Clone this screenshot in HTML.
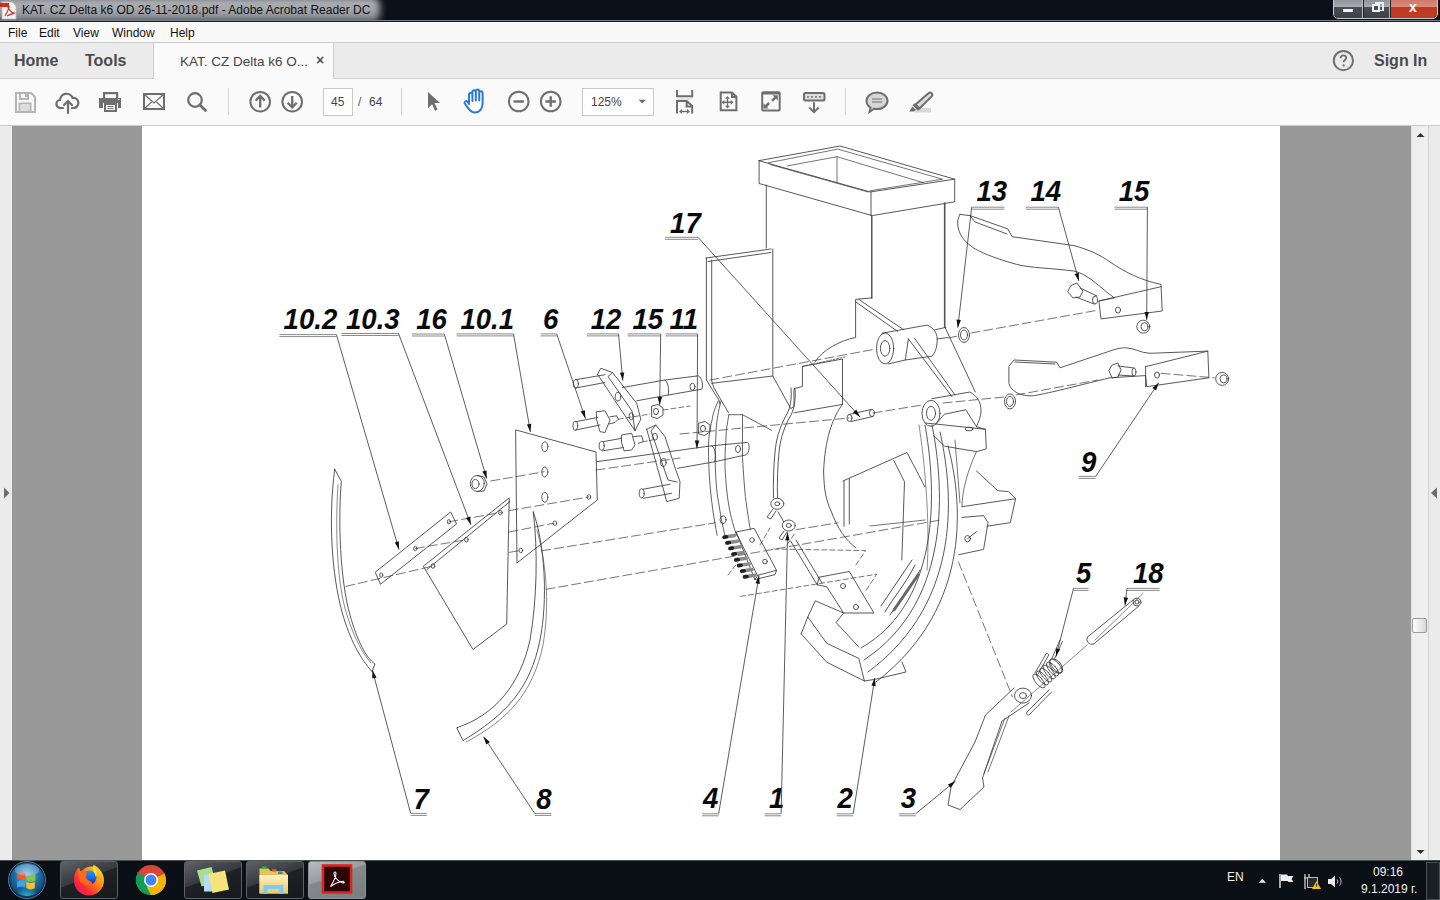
<!DOCTYPE html>
<html><head><meta charset="utf-8">
<style>
*{margin:0;padding:0;box-sizing:border-box}
html,body{width:1440px;height:900px;overflow:hidden;background:#999;font-family:"Liberation Sans",sans-serif;position:relative}
.abs{position:absolute}
svg{position:absolute;overflow:visible}
#title{left:0;top:0;width:1440px;height:22px;background:#0b1019}
#glow{left:-6px;top:-3px;width:386px;height:25px;background:linear-gradient(180deg,#b4b8bc 0%,#a4a8ad 50%,#7d8288 100%);filter:blur(3.5px);border-radius:8px}
#ttext{left:22px;top:3px;font-size:12px;color:#111;white-space:nowrap;letter-spacing:0}
#tline{left:0;top:20px;width:1440px;height:1px;background:#7a7f86}
#tline2{left:0;top:21px;width:1440px;height:1px;background:#1b1e22}
#menu{left:0;top:22px;width:1440px;height:20px;background:#f9f9f9}
#menu span{position:absolute;top:4px;font-size:12px;color:#111}
#tabs{left:0;top:42px;width:1440px;height:37px;background:#ebebeb;border-top:1px solid #c9c9c9;border-bottom:1px solid #cfcfcf}
#tabs b{position:absolute;top:9px;font-size:16px;color:#4b4b4b;font-weight:bold}
#acttab{left:153px;top:42px;width:181px;height:37px;background:#fafafa;border-left:1px solid #cdcdcd;border-right:1px solid #cdcdcd;border-top:1px solid #c9c9c9}
#acttab span{position:absolute;left:26px;top:11px;font-size:13.5px;color:#444;white-space:nowrap}
#toolbar{left:0;top:79px;width:1440px;height:47px;background:#fafafa;border-bottom:1px solid #cacaca}
.sep{position:absolute;top:88px;width:1px;height:27px;background:#d2d2d2}
.box{position:absolute;top:88px;height:28px;background:#fff;border:1px solid #c8c8c8}
#lstrip{left:0;top:126px;width:12px;height:734px;background:#ebebeb;border-right:1px solid #f2f2f2}
#gl{left:12px;top:126px;width:1px;height:734px;background:#939393}
#page{left:142px;top:126px;width:1138px;height:734px;background:#fff}
#rscroll{left:1411px;top:126px;width:18px;height:734px;background:#efefef;border-left:1px solid #e2e2e2;border-right:1px solid #d0d0d0}
#rstrip{left:1429px;top:126px;width:11px;height:734px;background:#ebebeb}
#thumb{left:1412px;top:618px;width:15px;height:15px;border:1px solid #9a9a9a;border-radius:2px;background:linear-gradient(90deg,#fdfdfd,#d8d8d8)}
#taskbar{left:0;top:860px;width:1440px;height:40px;background:#0b1016;border-top:1px solid #4a4f55}
.tb{position:absolute;top:861px;width:58px;height:38px;border:1px solid #5d6166;border-radius:3px;background:linear-gradient(160deg,#5e6266 0%,#35393d 45%,#1e2226 46%,#15191c 100%)}
.tray{position:absolute;color:#f2f2f2;font-size:12px;white-space:nowrap}
</style></head><body>
<div id="title" class="abs"></div>
<div id="glow" class="abs"></div>
<svg style="left:0;top:1px" width="18" height="19" viewBox="0 0 18 19"><path d="M2 1h10l4 4v13H2z" fill="#f4f4f4" stroke="#bbb" stroke-width="0.8"/><path d="M0 2h9v4H0z" fill="#d8261c"/><path d="M5 15c2-4 4-7 4-9s-1-1-1 0 3 6 6 6-2 0-7 3" fill="none" stroke="#d8261c" stroke-width="1.1"/></svg>
<div id="ttext" class="abs">KAT. CZ Delta k6 OD 26-11-2018.pdf - Adobe Acrobat Reader DC</div>
<div id="tline" class="abs"></div><div id="tline2" class="abs"></div>
<!-- window buttons -->
<div class="abs" style="left:1333px;top:-2px;width:105px;height:21px;border:1px solid #c8ccd0;border-radius:0 0 5px 5px;overflow:hidden;background:#222">
 <div class="abs" style="left:0;top:0;width:29px;height:20px;background:linear-gradient(180deg,#8c9096 0%,#a9adb1 40%,#4a4f57 42%,#3b4048 100%);border-right:1px solid #b9bdc2"></div>
 <div class="abs" style="left:30px;top:0;width:26px;height:20px;background:linear-gradient(180deg,#8c9096 0%,#a9adb1 40%,#4a4f57 42%,#3b4048 100%);border-right:1px solid #d0a8a0"></div>
 <div class="abs" style="left:57px;top:0;width:48px;height:20px;background:linear-gradient(180deg,#c9776a 0%,#dd8e7f 40%,#c2391f 42%,#b93e2a 100%)"></div>
 <div class="abs" style="left:9px;top:10px;width:10px;height:3px;background:#eef"></div>
 <div class="abs" style="left:41px;top:3px;width:9px;height:9px;border:2px solid #eee;border-left-width:1px;border-bottom-width:1px"></div>
 <div class="abs" style="left:38px;top:5px;width:8px;height:8px;border:2px solid #f4f4f4;background:#4a4f57"></div>
 <div class="abs" style="left:75px;top:0px;font:bold 14px 'Liberation Sans',sans-serif;color:#fff">x</div>
</div>
<div id="menu" class="abs"><span style="left:8px">File</span><span style="left:39px">Edit</span><span style="left:73px">View</span><span style="left:112px">Window</span><span style="left:170px">Help</span></div>
<div id="tabs" class="abs"><b style="left:14px">Home</b><b style="left:85px">Tools</b>
<b style="left:1374px;font-weight:bold">Sign In</b></div>
<svg style="left:1332px;top:49px" width="24" height="24" viewBox="0 0 24 24"><circle cx="11.4" cy="11.6" r="9.6" fill="none" stroke="#6e6e6e" stroke-width="2"/><path d="M8.6 9.2c0-1.8 1.2-2.8 2.8-2.8s2.8 1 2.8 2.6c0 1.9-2.6 2.2-2.6 4.2" fill="none" stroke="#6e6e6e" stroke-width="1.8"/><circle cx="11.6" cy="16.4" r="1.1" fill="#6e6e6e"/></svg>
<div id="acttab" class="abs"><span>KAT. CZ Delta k6 O...</span><span style="left:162px;top:8.5px;font-size:14px;font-weight:bold;color:#555">&#215;</span></div>
<div id="toolbar" class="abs"></div>
<div class="sep" style="left:228px"></div><div class="sep" style="left:401px"></div><div class="sep" style="left:845px"></div>
<div class="box" style="left:323px;width:30px"></div>
<div class="abs" style="left:331px;top:95px;font-size:12px;color:#444">45</div>
<div class="abs" style="left:358px;top:95px;font-size:12px;color:#555">/</div>
<div class="abs" style="left:369px;top:95px;font-size:12px;color:#444">64</div>
<div class="box" style="left:582px;width:72px"></div>
<div class="abs" style="left:591px;top:95px;font-size:12px;color:#444">125%</div>
<svg style="left:0;top:80px" width="940" height="46" viewBox="0 80 940 46" id="icons">
 <!-- save -->
 <g fill="none" stroke="#b4b4b4" stroke-width="2"><path d="M16 93h15l4 4v15H16z"/><path d="M20 93v6h8v-6"/><rect x="19.5" y="103.5" width="11" height="8"/></g>
 <rect x="25" y="94" width="2" height="3" fill="#b4b4b4"/><rect x="20.5" y="104.5" width="9" height="6" fill="#ddd"/>
 <!-- upload -->
 <g fill="none" stroke="#6e6e6e" stroke-width="2.2" stroke-linecap="round"><path d="M63 108h-2a4 4 0 0 1 -1 -8a6.5 6.5 0 0 1 12.6 -2a4.6 4.6 0 0 1 1.5 10h-2"/><path d="M68 113v-12M64 105l4-4 4 4"/></g>
 <!-- printer -->
 <g fill="#6e6e6e"><rect x="103" y="92" width="15" height="2.2"/><rect x="103" y="92" width="2.2" height="6"/><rect x="116" y="92" width="2.2" height="6"/><path d="M99 98h22v10h-3v-5h-15v5h-4z"/><path d="M104 103h13v9h-13z"/></g>
 <rect x="106" y="105" width="9" height="5" fill="#fafafa"/><rect x="107.5" y="106" width="6" height="1" fill="#6e6e6e"/><rect x="107.5" y="108" width="6" height="1" fill="#6e6e6e"/><rect x="118" y="99" width="1.5" height="1" fill="#fafafa"/>
 <!-- mail -->
 <g fill="none" stroke="#6e6e6e" stroke-width="2"><rect x="144" y="94" width="20" height="15"/><path d="M144 94l10 9 10-9M144 109l7.5-7M164 109l-7.5-7" stroke-width="1.2"/></g>
 <!-- search -->
 <g fill="none" stroke="#6e6e6e" stroke-width="2.2"><circle cx="195" cy="100" r="6.8"/><path d="M200 105l5.5 5.5" stroke-width="2.8" stroke-linecap="round"/></g>
 <!-- up/down -->
 <g fill="none" stroke="#6e6e6e" stroke-width="2"><circle cx="260.2" cy="101.7" r="9.8"/><path d="M260.2 107.5v-11M255.6 100.6l4.6-4.6 4.6 4.6" stroke-width="2.3"/>
 <circle cx="292.2" cy="101.7" r="9.8"/><path d="M292.2 96v11M287.6 102.8l4.6 4.6 4.6-4.6" stroke-width="2.3"/></g>
 <!-- cursor -->
 <path d="M428 92l12 11h-5.5l3 6.5-2.4 1.5-3-6.8-4.1 4z" fill="#6e6e6e"/>
 <!-- hand -->
 <path d="M469 104v-9.5a1.7 1.7 0 0 1 3.4 0v6.5v-9a1.7 1.7 0 0 1 3.4 0v8.5v-9.2a1.7 1.7 0 0 1 3.4 0v9.2v-7.5a1.7 1.7 0 0 1 3.4 0v10.5c0 5-3 9-7.5 9c-3 0-5-1.6-7-4.4l-3.4-4.6a1.7 1.7 0 0 1 2.6 -2z" fill="none" stroke="#2d7bd0" stroke-width="2" stroke-linejoin="round"/>
 <!-- zoom -->
 <g fill="none" stroke="#6e6e6e" stroke-width="2"><circle cx="518.7" cy="101.5" r="9.8"/><path d="M513.5 101.5h10.4" stroke-width="2.4"/><circle cx="550.7" cy="101.5" r="9.8"/><path d="M545.5 101.5h10.4M550.7 96.3v10.4" stroke-width="2.4"/></g>
 <path d="M638.5 99.8h7.5l-3.75 3.8z" fill="#6e6e6e"/>
 <!-- fit width -->
 <path d="M677,90v6.3h15.2v-6.3" fill="none" stroke="#6e6e6e" stroke-width="2"/>
 <rect x="677" y="98.5" width="15.2" height="1" fill="#cfcfcf"/>
 <path d="M677,113.5v-12.6h9.7l5.5,5v7.6M686.7,101v5.5h5.5" fill="none" stroke="#6e6e6e" stroke-width="2"/>
 <path d="M681,111.5h7" stroke="#6e6e6e" stroke-width="1.4"/><path d="M679,111.5l3-2.6v5.2zM690,111.5l-3-2.6v5.2z" fill="#6e6e6e"/>
 <!-- page arrows -->
 <path d="M720.7,110.2V92.5h11.2l4.5,4.2v13.5z M731.9,92.5v4.5h4.5" fill="none" stroke="#6e6e6e" stroke-width="2"/>
 <path d="M727.5,98.5v7.5M723.5,102.3h8" stroke="#6e6e6e" stroke-width="1.4"/>
 <path d="M727.5,96l-2.4,2.8h4.8zM727.5,108.6l-2.4,-2.8h4.8zM721.5,102.3l2.8,-2.4v4.8zM733.5,102.3l-2.8,-2.4v4.8z" fill="#6e6e6e"/>
 <!-- fullscreen -->
 <rect x="762.2" y="92.2" width="17.5" height="18.3" rx="1" fill="none" stroke="#6e6e6e" stroke-width="2"/>
 <rect x="763" y="93" width="16" height="1.5" fill="#6e6e6e"/>
 <path d="M772.5,95.2h5.3v5.3l-1.8,-1.8l-3,3l-1.8,-1.8l3,-3z M768.7,108.6h-5.3v-5.3l1.8,1.8l3,-3l1.8,1.8l-3,3z" fill="#6e6e6e"/>
 <!-- scroll -->
 <rect x="804" y="93" width="20.5" height="7.6" rx="1.5" fill="#dedede" stroke="#6e6e6e" stroke-width="2"/>
 <path d="M807.2,96.8h1.6M811.2,96.8h1.6M815.2,96.8h1.6M819.2,96.8h1.6" stroke="#6e6e6e" stroke-width="1.8"/>
 <path d="M814,102.2v10M809.3,107.5l4.7,4.7 4.7,-4.7" fill="none" stroke="#6e6e6e" stroke-width="2"/>
 <!-- comment -->
 <path d="M877 92.5c6 0 10.5 3.8 10.5 8.3s-4.5 8.3-10.5 8.3c-1 0-2 -0.1-3 -0.3l-4.5 3.2 1-4.4c-2.5-1.5-4-4-4-6.8 0-4.5 4.5-8.3 10.5-8.3z" fill="#d6d6d6" stroke="#6e6e6e" stroke-width="2"/><path d="M872 99h10M872 102h10" stroke="#6e6e6e" stroke-width="1.2"/>
 <!-- highlight -->
 <rect x="915" y="108" width="16" height="4.5" fill="#d8d8d8"/>
 <path d="M928.5,93.2c1,-0.8 2.4,-0.7 3.2,0.2c0.8,0.9 0.8,2.2 0,3L919.5,108.5l-4,-4z" fill="#dcdcdc" stroke="#6e6e6e" stroke-width="2" stroke-linejoin="round"/>
 <path d="M914.5,103.2l5.5,5.5l-2,2l-5.5,-5.5z" fill="#6e6e6e"/>
 <path d="M912.5,106.5l3.2,3.2l-1.5,1.8h-5z" fill="#6e6e6e"/>
</svg>
<div id="lstrip" class="abs"></div><div id="gl" class="abs"></div>
<svg style="left:3px;top:487px" width="8" height="12" viewBox="0 0 8 12"><path d="M1 0.5l5.5 5.5-5.5 5.5z" fill="#6b6b6b"/></svg>
<div id="page" class="abs"></div>
<!--DRAW-->
<svg style="left:0;top:0" width="1440" height="900" viewBox="0 0 1440 900">
<g fill="none" stroke="#3a3a3a" stroke-width="0.85" stroke-linejoin="round" stroke-linecap="round">

<!-- hopper -->
<path d="M759.1,160.6L840.1,146L954.7,179.2L870.6,191.9Z"/>
<path d="M768.3,162.8L837.8,149.1L942.4,179.2L869.9,190.8" stroke-width="0.7"/>
<path d="M787.4,165.9L837,156.7L923.3,182.7M837,156.7V182M770,164.5L868,192" stroke-width="0.7"/>
<path d="M759.1,160.6V183.5L872.2,215.6L954.7,201.8V179.2M871,192V215.6"/>
<path d="M766.3,185V248M871.7,216V298M944.4,203V327.5"/>
<!-- plate behind hopper -->
<path d="M706,258L771,249M708,261.5L771,252.5M706.4,258V380L719,400.2L720,404.4M711.7,260V381L713.8,387.5L728.5,412.8M772.8,249V376"/>
<path d="M711.7,383.3L772.8,376L790.8,408.6L794,406.5V388.6L802.4,386.5V366.4L842.5,359V404.4L794,412.8"/>
<path d="M802.4,366.4L845,357" stroke-dasharray="2,1.5" stroke-width="0.7"/>
<!-- tube wire -->
<path d="M791,388C792,400 790,408 787,414C781,424 777,436 775.5,447.7C773.5,465 773,485 773.6,498M795,389C796,400 794,409 791,415C785,425 781,437 779.5,448C777.5,465 777,485 777.6,498"/>
<!-- housing arcs -->
<path d="M871.9,297.9L855.6,299.4V337.5C840,340.7 822,350 815,362M842.5,404.4C832,418 825,440 823.6,471C824,490 826,500 830.7,510C838,530 846,540 855.6,547.6"/>
<path d="M718.2,401C714,410 712,418 712.4,418.6C709,432 708.5,440 708.5,447.7C708.5,460 709,470 709.4,476.9C711,500 714,520 717.2,535.2M721,401C718,412 717,420 716.2,428.3C715.5,445 715,455 715.3,467.2C716,485 717,495 719.2,506C721,518 723,528 725,535.2M728.9,414.7C727,425 726,432 726,438C725,450 725,460 725,467.2C726,485 727,495 728.9,506C731,518 734,528 736.6,535.2M742.5,414.7V457.5C743.5,475 744.5,488 745.4,496.3C747,510 749,522 750.3,529.4M728.9,414.7L742.5,414.7L771.6,430.3" stroke-width="0.8"/>
<ellipse cx="723" cy="519.7" rx="3" ry="3.8"/>
<!-- rib slot -->
<path d="M858.7,299.4L903.8,329.8M855.6,301.8L897.5,331.3M908.4,339L952,396.6M914.6,338.3L955,395"/>
<!-- upper bushing -->
<ellipse cx="885.1" cy="348.4" rx="8.6" ry="15.5"/><ellipse cx="885.1" cy="348.4" rx="4.7" ry="7.8"/>
<path d="M882,333.2L927,325.1C934,328 937.2,333 937.2,339C937.2,348 935,353 931.8,356.2L905.3,360L908.4,339M888.2,364L905.3,360M934.9,329.8L945.8,327.4M937.2,339L947.3,337.5"/>
<path d="M945,203V327.4L952,342.2L975.3,392M871.9,216V298"/>
<!-- circlips -->
<ellipse cx="964" cy="335" rx="5.5" ry="7.5"/><ellipse cx="964" cy="335" rx="3.5" ry="5"/>
<ellipse cx="1010" cy="401.4" rx="5.5" ry="7.5"/><ellipse cx="1010" cy="401.4" rx="3.5" ry="5"/>
<!-- lower bushing + coulter eye block -->
<path d="M931.8,398.7L970,392C977,396 981,402 981,410C981,418 978,422 976.5,426.7"/>
<ellipse cx="931" cy="413.3" rx="9" ry="13"/><ellipse cx="931" cy="413.3" rx="4.5" ry="7"/>
<path d="M925,423L935.6,424L944.5,414.2L965.8,409.8L976.5,426.7L985.4,429.3L986.3,448.9L976.5,451.6L944.5,446.2L933.8,435.6M935.6,424L985.4,429.3"/>
<ellipse cx="969" cy="429" rx="4" ry="1.8"/>
<!-- coulter arcs -->
<path d="M925,425C935,480 945,600 861,648"/>
<path d="M932,425C943,480 955,600 864,660"/>
<path d="M940,432C952,485 966,600 868,672"/>
<path d="M948,446C961,495 976,605 876,682"/>
<path d="M976.5,451.6C968,470 962,490 962,506.7M955,440L960,503" stroke-width="0.7"/>
<path d="M919,425C926,470 930,530 927,570" stroke-width="0.6"/>
<!-- right bracket -->
<path d="M976.5,471L997.8,490.7L1008.5,491.6L1015.6,498.7L1010.3,522.7L987,526.2M962,506.7L1015.6,498.7M962,517.4L983.6,515.6L988,522.7L983.6,549.4L958.7,554.7"/>
<ellipse cx="967.6" cy="538.7" rx="2.8" ry="3.2"/><path d="M967.6,538.7L976.5,531.6"/>
<!-- inner plates -->
<path d="M843,481L907,452.5L925,487M844,481V526.3M849.3,478.8V524M893.8,460.5L904.5,481.8L901.8,560"/>
<path d="M870,526L925,520" stroke-width="0.7"/>
<!-- bottom sled & tube piece -->
<path d="M801.2,633.9L807.8,616.9L826.7,643.3L858.8,658.4L864.4,681L826.7,662.2L801.2,633.9M807.8,616.9L815.3,600.8L843.6,613L836.1,622.5L858.8,647M864.4,681L875.8,679.2L906,672L902,662"/>
<path d="M790.8,541.3L817.2,584.8L826.7,586.7L843.6,613L873.9,613L849.3,571.5L819.1,577.2M796,540L822,583M817.2,584.8L819.1,577.2"/>
<ellipse cx="843" cy="586" rx="2.5" ry="2.5"/><ellipse cx="856" cy="607" rx="2.5" ry="2.5"/>

<path d="M885,612C895,595 905,585 915,565M890,615C900,600 910,588 920,570M881,606L912,560" stroke-width="0.9"/>
<path d="M894,610L918,575" stroke="#666" stroke-width="3" stroke-dasharray="1,1.2"/>
<!-- grommets -->
<ellipse cx="777.3" cy="503.8" rx="6.5" ry="5.5"/><ellipse cx="777.3" cy="503.8" rx="2.5" ry="2"/>
<ellipse cx="788.8" cy="525.5" rx="6.5" ry="5.5"/><ellipse cx="788.8" cy="525.5" rx="2.5" ry="2"/>
<path d="M773,509L767,517L770.8,519L776,511M784,531L779,538L782,540L787,532M778,511.8L783.8,521.9"/>
<!-- part 4 housing strips -->

<!-- brush block 4 -->
<path d="M736.1,532L754.2,528.4L776.5,570.3L757.8,575.3ZM757.8,575.3L754.9,579.6L775.1,574.6L776.5,570.3M736.1,532L754.9,579.6"/>
<path d="M724.5,537.0L734.5,535.5" stroke="#8a8a8a" stroke-width="3.4" stroke-linecap="round"/>
<path d="M724.0,537.2L726.5,536.8" stroke="#222" stroke-width="3.6" stroke-linecap="round"/>
<path d="M727.4,542.7L737.4,541.2" stroke="#8a8a8a" stroke-width="3.4" stroke-linecap="round"/>
<path d="M726.9,542.9L729.4,542.5" stroke="#222" stroke-width="3.6" stroke-linecap="round"/>
<path d="M730.4,548.3L740.4,546.8" stroke="#8a8a8a" stroke-width="3.4" stroke-linecap="round"/>
<path d="M729.9,548.5L732.4,548.1" stroke="#222" stroke-width="3.6" stroke-linecap="round"/>
<path d="M733.3,554.0L743.3,552.5" stroke="#8a8a8a" stroke-width="3.4" stroke-linecap="round"/>
<path d="M732.8,554.2L735.3,553.8" stroke="#222" stroke-width="3.6" stroke-linecap="round"/>
<path d="M736.2,559.7L746.2,558.2" stroke="#8a8a8a" stroke-width="3.4" stroke-linecap="round"/>
<path d="M735.7,559.9L738.2,559.5" stroke="#222" stroke-width="3.6" stroke-linecap="round"/>
<path d="M739.1,565.4L749.1,563.9" stroke="#8a8a8a" stroke-width="3.4" stroke-linecap="round"/>
<path d="M738.6,565.6L741.1,565.2" stroke="#222" stroke-width="3.6" stroke-linecap="round"/>
<path d="M742.1,571.0L752.1,569.5" stroke="#8a8a8a" stroke-width="3.4" stroke-linecap="round"/>
<path d="M741.6,571.2L744.1,570.8" stroke="#222" stroke-width="3.6" stroke-linecap="round"/>
<path d="M745.0,576.7L755.0,575.2" stroke="#8a8a8a" stroke-width="3.4" stroke-linecap="round"/>
<path d="M744.5,576.9L747.0,576.5" stroke="#222" stroke-width="3.6" stroke-linecap="round"/>
<ellipse cx="752" cy="540" rx="2.3" ry="2.3"/><ellipse cx="765" cy="561.6" rx="2.3" ry="2.3"/>
<path d="M728,575L738,562M740.6,596.4L876.7,574.2L865,592M773.9,549L865.6,550.6L854.4,567.2M760,545L770,528M787,545L795,533" stroke-dasharray="5,3" stroke-width="0.7"/>
<!-- rod 11 -->
<path d="M596.7,461.7L711.7,445.8L747.5,442.4C750,444 750,453 745.4,455L715,461.7L677.5,468.3M711.7,445.8C716,448 716,457 715,461.7"/>
<ellipse cx="738" cy="449" rx="2.5" ry="3.5"/>
<!-- upper rod 12 -->
<path d="M575.8,379.7L605,374.7M575.8,388L605,382.5"/><ellipse cx="575.8" cy="383.8" rx="2.5" ry="4.2"/>
<path d="M622.5,387.5L665,380L698.3,375.8C703,378 703,388 701.7,389.2L668.3,395L636.7,400.8M665,380C669,383 669,392 668.3,395"/>
<ellipse cx="692.5" cy="386.7" rx="2.5" ry="3.5"/>
<path d="M597.5,374.2L600.8,368.3L612.5,372.5L636.7,403.3L640.8,419.2L635,430.8L597.5,374.2M612.5,372.5L608,376.5L632,411L635,430.8"/>
<ellipse cx="618" cy="396.7" rx="2.8" ry="4.2"/><ellipse cx="631.3" cy="416.3" rx="2.3" ry="3.5"/>
<!-- bolt 6 -->
<path d="M575.8,421.7L597.5,417.5M575.8,430L600,425M596.7,411.7L605,410.8L610,420L605,432.5L600,431.7L596.7,420ZM610,416.7L616.7,415.8L618.3,419.2L615,422.5L609,424"/>
<ellipse cx="575.3" cy="425.8" rx="2.3" ry="4.5"/>
<path d="M618.3,419.2L650,414M663,410L690,406" stroke-dasharray="5,3" stroke-width="0.7"/>
<!-- nuts -->
<path d="M652,406L658,404.5L663,408L663,415L657.5,418.5L652,417Z"/><ellipse cx="656" cy="411.5" rx="2.5" ry="3.2"/>
<path d="M699,423L705,421.5L710,425L710,432L704.5,435.5L699,434Z"/><ellipse cx="703" cy="428.5" rx="2.5" ry="3.2"/>
<!-- lower pin & bracket 11 -->
<path d="M603,441.7L621.7,438.3M602.5,450.8L623.3,447.5M621.7,435L631.7,433.3L635,445L631.7,450L624,450.8L621.7,443ZM633.3,436.7L641.7,435.8L643.3,441.7L638.3,443.3"/>
<ellipse cx="601.7" cy="445.8" rx="2.5" ry="4.5"/>
<path d="M643.3,441.7L655,439.5" stroke-dasharray="4,2" stroke-width="0.7"/>
<path d="M646.7,429.2L655.8,425L665,436.7L675.8,470L680,481.7L679.2,498.3L666.7,501.7L665,495L646.7,429.2M655.8,425L651,431L668,480L677,482"/>
<ellipse cx="655" cy="436.7" rx="2.5" ry="3.5"/><ellipse cx="663.3" cy="462.5" rx="2.8" ry="4"/>
<path d="M643.3,489.2L670,484.2M643.3,498.3L671.7,493.3"/><ellipse cx="641.7" cy="493.3" rx="2.5" ry="4.5"/>
<!-- pin 17 -->
<path d="M849,414.5L871,409.5M851,421.5L873,416.5"/><ellipse cx="849.5" cy="418" rx="2.5" ry="3.5"/><ellipse cx="872" cy="413" rx="2.5" ry="3.5"/>
<!-- plate 10.1 -->
<path d="M516,430L596,452L597.3,500L517.3,562.7Z"/>
<ellipse cx="544.8" cy="446.7" rx="3" ry="5"/><ellipse cx="544.8" cy="472" rx="3" ry="5"/><ellipse cx="544.8" cy="497.3" rx="3" ry="5"/>
<!-- plate 10.3 -->
<path d="M423.6,566L509.2,497.9L506.7,624L473.3,649.3Z M427,569.5L510,501.5"/>
<ellipse cx="433" cy="566" rx="1.8" ry="2.3"/><ellipse cx="466.4" cy="539.7" rx="1.8" ry="2.3"/><ellipse cx="500.4" cy="512.5" rx="1.8" ry="2.3"/>
<!-- strip 10.2 -->
<path d="M375.5,572L450.7,512L456.5,524L380.8,584Z"/>
<ellipse cx="381.2" cy="575.1" rx="1.6" ry="2.2"/><ellipse cx="415.4" cy="548.5" rx="1.6" ry="2.2"/><ellipse cx="448.9" cy="521.8" rx="1.6" ry="2.2"/>
<!-- nut 16 -->
<ellipse cx="477.3" cy="483.5" rx="7" ry="8"/><ellipse cx="475.5" cy="484" rx="3.5" ry="4.5"/><path d="M477,475.5L484,477L487,484L484,491L477,491.5"/>
<!-- part 7 -->
<path d="M334.7,469.3L341.3,481.3C338,520 340,580 350,615C357,640 366,658 375,664L372,671.6C360,658 350,640 342,612C332,575 328,520 334.7,469.3Z"/>
<path d="M338,485C335,530 337,585 347,615C354,638 363,654 371,663" stroke-width="0.6"/>
<!-- part 8 -->
<path d="M533.3,512C545,545 548,600 540,640C530,690 505,715 463,740.6L456.7,727.8C495,715 520,685 530,640C537,600 538,550 533.3,512Z"/>
<path d="M537,530C548,570 549,610 543,645C533,693 508,720 466,742" stroke-width="0.6"/>
<!-- dashed axes -->
<g stroke-dasharray="9,4" stroke-width="0.7">
<path d="M710,380L876,349M948,338L958,336M971,333L1098.9,310"/>
<path d="M680,434L849,418M873,413L922,405M943,403L1004,397M1016,395L1098,380"/>
<path d="M345.8,586.4L433,566M415.4,548.5L466.4,539.7M448.9,521.8L500.4,512.5M509.2,510.6L588.9,497M509.2,532L553.9,523.2M509.2,552.4L520.8,550.4"/>
<path d="M490.7,481L544.2,471.7M541.7,550.8L715.6,522.8M546,589.3L940.5,520M796,529.7L837.8,522.8"/>
<path d="M596,470L680,458"/>
<path d="M1161,373.3L1214.4,377.8M958.5,562L1012.5,697"/>
</g>
<g fill="none" stroke-width="0.8">
<ellipse cx="588.9" cy="497" rx="1.8" ry="2.3"/><ellipse cx="554.9" cy="523.2" rx="1.8" ry="2.3"/><ellipse cx="520.8" cy="550.4" rx="1.8" ry="2.3"/>
</g>
<!-- upper arm 13-15 -->
<path d="M960,214.4L970,215.6L1007.8,228.9L1012,236.7L1074,245.6C1090,250 1100,255 1110,262C1125,272 1140,280 1161,284.4L1162.2,311L1101,318.9L1098.9,301L1114.4,297.8C1100,288 1090,275 1074,271C1050,268 1030,268 1016.7,264.4C990,257 975,250 968.9,244.4C958,236 955,222 960,214.4Z"/>
<path d="M970,215.6L975,222L1007,234M1098.9,301L1161,286.7"/>
<ellipse cx="1118" cy="310" rx="2.5" ry="3"/>
<path d="M1071,285.6L1077,283L1083,291L1080,297L1073,298L1068,292ZM1080,288L1097,296M1076,297L1094,304"/><ellipse cx="1095" cy="300" rx="2.5" ry="4"/>
<ellipse cx="1143.3" cy="326.7" rx="6.5" ry="6.5"/><ellipse cx="1144.5" cy="326.7" rx="3.5" ry="4"/>
<!-- lower arm 9 -->
<path d="M1014.4,360L1056.7,362.2L1060,367.8L1103.3,353.3C1115,349 1120,347.8 1125.6,347.8C1135,348 1140,353 1150,353.3L1207.8,351.1L1208.9,377.8L1146.7,386.7L1145.6,375.6L1110,377.8C1080,385 1050,393 1034.4,395.6C1020,397 1009,390 1008.9,382.2V366.7Z"/>
<path d="M1145.6,366.7L1207.8,351.1M1145.6,366.7V386.7M1015,362L1055,364"/>
<path d="M1112.2,365L1118,363L1121,370L1118,377L1112,378L1109,371ZM1118,366L1134,368M1118,375L1134,376"/><ellipse cx="1134" cy="372" rx="2" ry="4"/>
<ellipse cx="1157" cy="375" rx="2.5" ry="3"/>
<ellipse cx="1222.2" cy="378.9" rx="6.5" ry="6.5"/><ellipse cx="1223.5" cy="378.9" rx="3.5" ry="4"/>
<!-- lever 3, spring 5, rod 18 -->
<ellipse cx="1023" cy="695.6" rx="8.5" ry="7.5"/><ellipse cx="1023" cy="695.6" rx="3.5" ry="3"/>
<path d="M1014,688L985.5,715L975,742L951,787L948,805L960,809.6L984,787L982.5,778L1002,721L1029,703"/>
<path d="M1005,718L984,773.6M1009,716L988,772" stroke-width="0.7"/>
<path d="M1011,712L1087,645M1095,640L1143,593.5" stroke-width="0.6"/>
<path d="M1087.6,637L1133,600M1093.6,644L1139,606M1087.6,637C1085,640 1089,646 1093.6,644"/>
<ellipse cx="1137" cy="602" rx="4" ry="4"/><ellipse cx="1137" cy="602" rx="2" ry="2"/>
<ellipse cx="1039.0" cy="681.0" rx="3.5" ry="8.5" transform="rotate(-40 1039.0 681.0)" stroke-width="0.8"/>
<ellipse cx="1042.4" cy="678.0" rx="3.5" ry="8.5" transform="rotate(-40 1042.4 678.0)" stroke-width="0.8"/>
<ellipse cx="1045.8" cy="675.0" rx="3.5" ry="8.5" transform="rotate(-40 1045.8 675.0)" stroke-width="0.8"/>
<ellipse cx="1049.2" cy="672.0" rx="3.5" ry="8.5" transform="rotate(-40 1049.2 672.0)" stroke-width="0.8"/>
<ellipse cx="1052.6" cy="669.0" rx="3.5" ry="8.5" transform="rotate(-40 1052.6 669.0)" stroke-width="0.8"/>
<ellipse cx="1056.0" cy="666.0" rx="3.5" ry="8.5" transform="rotate(-40 1056.0 666.0)" stroke-width="0.8"/>
<ellipse cx="1056" cy="666" rx="5" ry="8.5" transform="rotate(-40 1056 666)"/>
<path d="M1046,654L1035,673M1048.5,655.5L1037.5,675M1046,654C1047,652 1049.5,654 1048.5,655.5M1049,690L1027,712M1051.5,692L1029.5,714.5M1027,712C1025.5,714 1028,716.5 1029.5,714.5M1060,640L1052,658M1062.5,641.5L1054.5,659" stroke-width="0.8"/>

</g>
<g font-family="Liberation Sans" font-weight="bold" font-style="italic" font-size="30" fill="#0a0a0a">
<text transform="translate(283.6,329.2) scale(0.92,1)">10.2</text>
<text transform="translate(346.0,328.5) scale(0.92,1)">10.3</text>
<text transform="translate(416.2,328.5) scale(0.92,1)">16</text>
<text transform="translate(460.4,328.6) scale(0.92,1)">10.1</text>
<text transform="translate(543.0,328.6) scale(0.92,1)">6</text>
<text transform="translate(590.7,328.6) scale(0.92,1)">12</text>
<text transform="translate(632.5,328.6) scale(0.92,1)">15</text>
<text transform="translate(669.4,328.6) scale(0.92,1)">11</text>
<text transform="translate(670.1,232.9) scale(0.92,1)">17</text>
<text transform="translate(976.5,201.2) scale(0.92,1)">13</text>
<text transform="translate(1030.5,201.2) scale(0.92,1)">14</text>
<text transform="translate(1118.7,201.2) scale(0.92,1)">15</text>
<text transform="translate(1081.0,472.3) scale(0.92,1)">9</text>
<text transform="translate(1076.0,583.0) scale(0.92,1)">5</text>
<text transform="translate(1133.0,583.0) scale(0.92,1)">18</text>
<text transform="translate(413.6,808.8) scale(0.92,1)">7</text>
<text transform="translate(536.2,808.8) scale(0.92,1)">8</text>
<text transform="translate(702.9,808.4) scale(0.92,1)">4</text>
<text transform="translate(768.9,808.4) scale(0.92,1)">1</text>
<text transform="translate(837.4,808.4) scale(0.92,1)">2</text>
<text transform="translate(900.8,808.4) scale(0.92,1)">3</text>
</g>
<g fill="none" stroke="#8a8a8a" stroke-width="1">
<path d="M279.4,334.6H336.4M279.4,336.6H336.4"/>
<path d="M341.5,333.5H398.5M341.5,335.5H398.5"/>
<path d="M412.0,334.0H444.3M412.0,336.0H444.3"/>
<path d="M456.5,333.9H513.5M456.5,335.9H513.5"/>
<path d="M540.7,333.9H556.7M540.7,335.9H556.7"/>
<path d="M586.8,333.9H618.5M586.8,335.9H618.5"/>
<path d="M627.6,333.9H660.7M627.6,335.9H660.7"/>
<path d="M665.5,333.9H697.6M665.5,335.9H697.6"/>
<path d="M665.0,237.3H698.0M665.0,239.3H698.0"/>
<path d="M971.7,207.2H1004.5M971.7,209.2H1004.5"/>
<path d="M1025.6,207.2H1058.4M1025.6,209.2H1058.4"/>
<path d="M1114.6,207.2H1147.4M1114.6,209.2H1147.4"/>
<path d="M1078.7,476.4H1095.7M1078.7,478.4H1095.7"/>
<path d="M1073.5,588.4H1088.5M1073.5,590.4H1088.5"/>
<path d="M1127.0,588.4H1159.6M1127.0,590.4H1159.6"/>
<path d="M410.7,813.4H426.8M410.7,815.4H426.8"/>
<path d="M534.7,813.4H551.3M534.7,815.4H551.3"/>
<path d="M702.2,813.8H718.6M702.2,815.8H718.6"/>
<path d="M764.7,813.8H781.1M764.7,815.8H781.1"/>
<path d="M836.7,813.8H853.2M836.7,815.8H853.2"/>
<path d="M899.2,813.8H915.7M899.2,815.8H915.7"/>
</g><g fill="none" stroke="#333" stroke-width="0.8">
<path d="M336.4,334.6L399.0,549.6"/>
<path d="M398.5,333.5L470.9,524.8"/>
<path d="M444.3,334.0L486.7,478.7"/>
<path d="M513.5,333.9L530.4,432.0"/>
<path d="M556.7,333.9L585.4,418.5"/>
<path d="M618.5,333.9L622.8,380.6"/>
<path d="M660.7,333.9L659.7,404.9"/>
<path d="M697.6,333.9L697.0,448.6"/>
<path d="M698.0,237.3L860.0,417.0"/>
<path d="M971.7,207.2L957.8,327.8"/>
<path d="M1058.4,207.2L1078.9,281.0"/>
<path d="M1147.4,207.2L1146.7,320.0"/>
<path d="M1095.7,476.4L1158.7,382.7"/>
<path d="M1073.5,588.4L1056.0,656.5"/>
<path d="M1127.0,588.4L1125.0,605.5"/>
<path d="M410.7,813.4L372.4,670.3"/>
<path d="M534.7,813.4L483.6,736.7"/>
<path d="M718.6,813.8L759.0,575.7"/>
<path d="M781.1,813.8L787.6,532.4"/>
<path d="M853.2,813.8L874.8,678.0"/>
<path d="M915.7,813.8L955.5,781.0"/>
</g>
<path d="M399.0,549.6L394.7,542.5L398.9,541.3Z" fill="#111"/>
<path d="M470.9,524.8L466.0,518.1L470.1,516.5Z" fill="#111"/>
<path d="M486.7,478.7L482.3,471.6L486.6,470.4Z" fill="#111"/>
<path d="M530.4,432.0L526.9,424.5L531.2,423.7Z" fill="#111"/>
<path d="M585.4,418.5L580.7,411.6L584.9,410.2Z" fill="#111"/>
<path d="M622.8,380.6L619.9,372.8L624.3,372.4Z" fill="#111"/>
<path d="M659.7,404.9L657.6,396.9L662.0,396.9Z" fill="#111"/>
<path d="M697.0,448.6L694.8,440.6L699.2,440.6Z" fill="#111"/>
<path d="M860.0,417.0L853.0,412.5L856.3,409.6Z" fill="#111"/>
<path d="M957.8,327.8L956.5,319.6L960.9,320.1Z" fill="#111"/>
<path d="M1078.9,281.0L1074.6,273.9L1078.9,272.7Z" fill="#111"/>
<path d="M1146.7,320.0L1144.5,312.0L1148.9,312.0Z" fill="#111"/>
<path d="M1158.7,382.7L1156.1,390.6L1152.4,388.1Z" fill="#111"/>
<path d="M1056.0,656.5L1055.9,648.2L1060.1,649.3Z" fill="#111"/>
<path d="M1125.0,605.5L1123.7,597.3L1128.1,597.8Z" fill="#111"/>
<path d="M372.4,670.3L376.6,677.5L372.3,678.6Z" fill="#111"/>
<path d="M483.6,736.7L489.9,742.1L486.2,744.6Z" fill="#111"/>
<path d="M759.0,575.7L759.8,584.0L755.5,583.2Z" fill="#111"/>
<path d="M787.6,532.4L789.6,540.4L785.2,540.3Z" fill="#111"/>
<path d="M874.8,678.0L875.7,686.2L871.4,685.6Z" fill="#111"/>
<path d="M955.5,781.0L950.7,787.8L947.9,784.4Z" fill="#111"/>
</svg>
<!--/DRAW-->
<div id="rscroll" class="abs"></div>
<div id="rstrip" class="abs"></div>
<div id="thumb" class="abs"></div>
<svg style="left:1416px;top:132px" width="9" height="6" viewBox="0 0 9 6"><path d="M0.5 5l4-4 4 4z" fill="#333"/></svg>
<svg style="left:1416px;top:849px" width="9" height="6" viewBox="0 0 9 6"><path d="M0.5 1l4 4 4-4z" fill="#333"/></svg>
<svg style="left:1430px;top:487px" width="8" height="12" viewBox="0 0 8 12"><path d="M7 0.5l-6 5.5 6 5.5z" fill="#6b6b6b"/></svg>
<div id="taskbar" class="abs"></div>
<div class="tb" style="left:60px"></div>
<div class="tb" style="left:184px"></div>
<div class="tb" style="left:246px"></div>
<div class="tb" style="left:308px;border-color:#8e9296;background:linear-gradient(160deg,#b9bcbf 0%,#9a9da0 40%,#85888b 41%,#7b7e81 100%)"></div>
<svg style="left:0;top:860px" width="1440" height="40" viewBox="0 860 1440 40">
 <defs>
  <radialGradient id="orb" cx="0.5" cy="0.35" r="0.65"><stop offset="0" stop-color="#7cc4e8"/><stop offset="0.55" stop-color="#1d6fa8"/><stop offset="1" stop-color="#0a3d66"/></radialGradient>
  <radialGradient id="orbg" cx="0.5" cy="1" r="0.6"><stop offset="0" stop-color="#3ad0f5"/><stop offset="1" stop-color="#3ad0f5" stop-opacity="0"/></radialGradient>
  <radialGradient id="ff" cx="0.6" cy="0.25" r="0.85"><stop offset="0" stop-color="#ffe14a"/><stop offset="0.45" stop-color="#ff8a1c"/><stop offset="0.8" stop-color="#f03a3a"/><stop offset="1" stop-color="#c8206a"/></radialGradient>
  <linearGradient id="fold" x1="0" y1="0" x2="0" y2="1"><stop offset="0" stop-color="#fff3c4"/><stop offset="1" stop-color="#e8c86a"/></linearGradient>
 </defs>
 <circle cx="27" cy="880" r="18.5" fill="#0b2a44" stroke="#5a7a92" stroke-width="1"/>
 <circle cx="27" cy="880" r="17" fill="url(#orb)"/>
 <ellipse cx="27" cy="889" rx="11" ry="7" fill="url(#orbg)" opacity="0.8"/>
 <path d="M17.5,873.5c3-1.5 5-1.5 8.2,0.3v6.2c-3-1.6-5.2-1.6-8.2,-0.2z" fill="#f25a22"/>
 <path d="M26.8,874.2c3,1.7 5.5,1.7 8.5,0.2v6.3c-3,1.5-5.5,1.5-8.5,-0.2z" fill="#8ac43e"/>
 <path d="M17,881.3c3-1.4 5.2-1.4 8.2,0.2v6.3c-3-1.6-5.2-1.6-8.2,-0.1z" fill="#3aa6e8"/>
 <path d="M26.3,881.8c3,1.7 5.5,1.7 8.5,0.2v6.3c-3,1.5-5.5,1.5-8.5,-0.2z" fill="#fbc02a"/>
 <ellipse cx="27" cy="870" rx="12" ry="6" fill="#fff" opacity="0.25"/>
 <!-- firefox -->
 <defs><linearGradient id="ffr" x1="0" y1="1" x2="1" y2="0"><stop offset="0" stop-color="#d0127a"/><stop offset="0.3" stop-color="#ff2a3a"/><stop offset="0.55" stop-color="#ff7a1a"/><stop offset="0.8" stop-color="#ffc21a"/><stop offset="1" stop-color="#fff44a"/></linearGradient>
 <linearGradient id="ffb" x1="0" y1="0" x2="0" y2="1"><stop offset="0" stop-color="#1a9cff"/><stop offset="0.6" stop-color="#1660e0"/><stop offset="1" stop-color="#3a1a9a"/></linearGradient></defs>
 <path d="M93.3,864.5C100,868 104,874 104,880.5C104,889 97,895.5 89,895.5C80.5,895.5 74,889 74,880.5C74,875 76,870 79,867.5L80.5,871.5L84,869C86,867 90,866 93.5,866.8Z" fill="url(#ffr)"/>
 <circle cx="89.5" cy="877.5" r="7" fill="url(#ffb)"/>
 <path d="M79,868L80.5,872L84,870C86,872 88,873 86.5,875.5C85,877 87,880 90,881C92,882 93,883 91,884.5C87,886 82,884 80,881C78,877 78,872 79,868Z" fill="#ff6a1a"/>
 <path d="M93.5,866C96.5,869 97.5,873 96,877C95,874 94,871 92.5,869Z" fill="#ffe83a"/>
 <!-- chrome -->
 <circle cx="151" cy="880" r="15" fill="#db4437"/>
 <path d="M151,880L138,887.5A15,15 0 0 0 151,895Z M138,887.5A15,15 0 0 1 137.3,873.5L151,880Z" fill="#0f9d58"/>
 <path d="M151,880L137.3,873.5A15,15 0 0 1 137,872L151,880Z" fill="#0f9d58"/>
 <path d="M151,880L165.8,878A15,15 0 0 1 151,895Z" fill="#f4b400"/>
 <path d="M151,880L164.8,873.5L166,880A15,15 0 0 1 151,895L145,884Z" fill="#f4b400"/>
 <path d="M151,880L136,880A15,15 0 0 0 144,893L151,880Z" fill="#0f9d58"/>
 <circle cx="151" cy="880" r="7" fill="#fff"/><circle cx="151" cy="880" r="5.5" fill="#4285f4"/>
 <!-- sticky notes -->
 <path d="M197,870.5l14.5,-3.5l4.5,16l-14.5,3.5z" fill="#a6e08e"/>
 <path d="M204,874.5h14v17h-14z" fill="#b4dcf6"/>
 <path d="M208.5,874l16.5,-3.5l4,19l-16.5,3.5z" fill="#f8e27a"/>
 <!-- explorer -->
 <path d="M259.5,868.5h9l2,2.5h13.5l4,4v18.5h-28.5z" fill="#e6c35a"/>
 <rect x="262" y="866.5" width="4.5" height="2.5" fill="#2fb24a"/><rect x="272" y="869" width="4.5" height="2.5" fill="#e0502a"/><rect x="278" y="871.5" width="4.5" height="2.5" fill="#2a88d8"/>
 <rect x="259.5" y="875" width="28.5" height="18.5" fill="url(#fold)"/>
 <path d="M263.5,894v-9h20v9h-4v-5h-12v5z" fill="#7ccbf2"/>
 <!-- acrobat -->
 <rect x="323" y="865.5" width="28" height="27" fill="#2a0606" stroke="#dd2222" stroke-width="2.6"/>
 <path d="M330.5,886.5c2.5,-4 5.5,-9.5 5.5,-13c0,-2 -2,-2 -2,0c0,3.5 5,9 9,9.5c2,0.2 1.5,-2 -1.5,-1.5c-4,0.8 -7.5,2.5 -11,5z" fill="none" stroke="#f4f4f4" stroke-width="1.1"/>
 <!-- tray -->
 <path d="M1258.7,882.8l3.6,-4 3.6,4z" fill="#f0f0f0"/>
 <path d="M1280,874v14" stroke="#eee" stroke-width="1.4"/><path d="M1281,874.5h6l1,1.5h5.5l-2,3 2,3h-5l-1,-1h-6.5z" fill="#eee"/>
 <path d="M1305,874v15M1309,874v4M1304,878h6v3" stroke="#ddd" stroke-width="1.2" fill="none"/><rect x="1307.5" y="877.5" width="10" height="10" fill="#2a2a2a" stroke="#bbb" stroke-width="1"/>
 <path d="M1312,889l4.5,-8 4.5,8z" fill="#f1c40f"/><path d="M1316.5,883.5v3" stroke="#222" stroke-width="1"/>
 <path d="M1328,879h3l4,-3.5v12l-4,-3.5h-3z" fill="#eee"/><path d="M1337,879.5c1,1 1,3 0,4M1339.5,877.5c2,2 2,6 0,8" fill="none" stroke="#ddd" stroke-width="1"/>
 <rect x="1426.5" y="862.5" width="13" height="37" fill="#1a1f25" stroke="#4c5157" stroke-width="1"/>
</svg>
<div class="tray" style="left:1227px;top:870px">EN</div>
<div class="tray" style="left:1373px;top:865px">09:16</div>
<div class="tray" style="left:1361px;top:882px">9.1.2019 г.</div>
</body></html>
